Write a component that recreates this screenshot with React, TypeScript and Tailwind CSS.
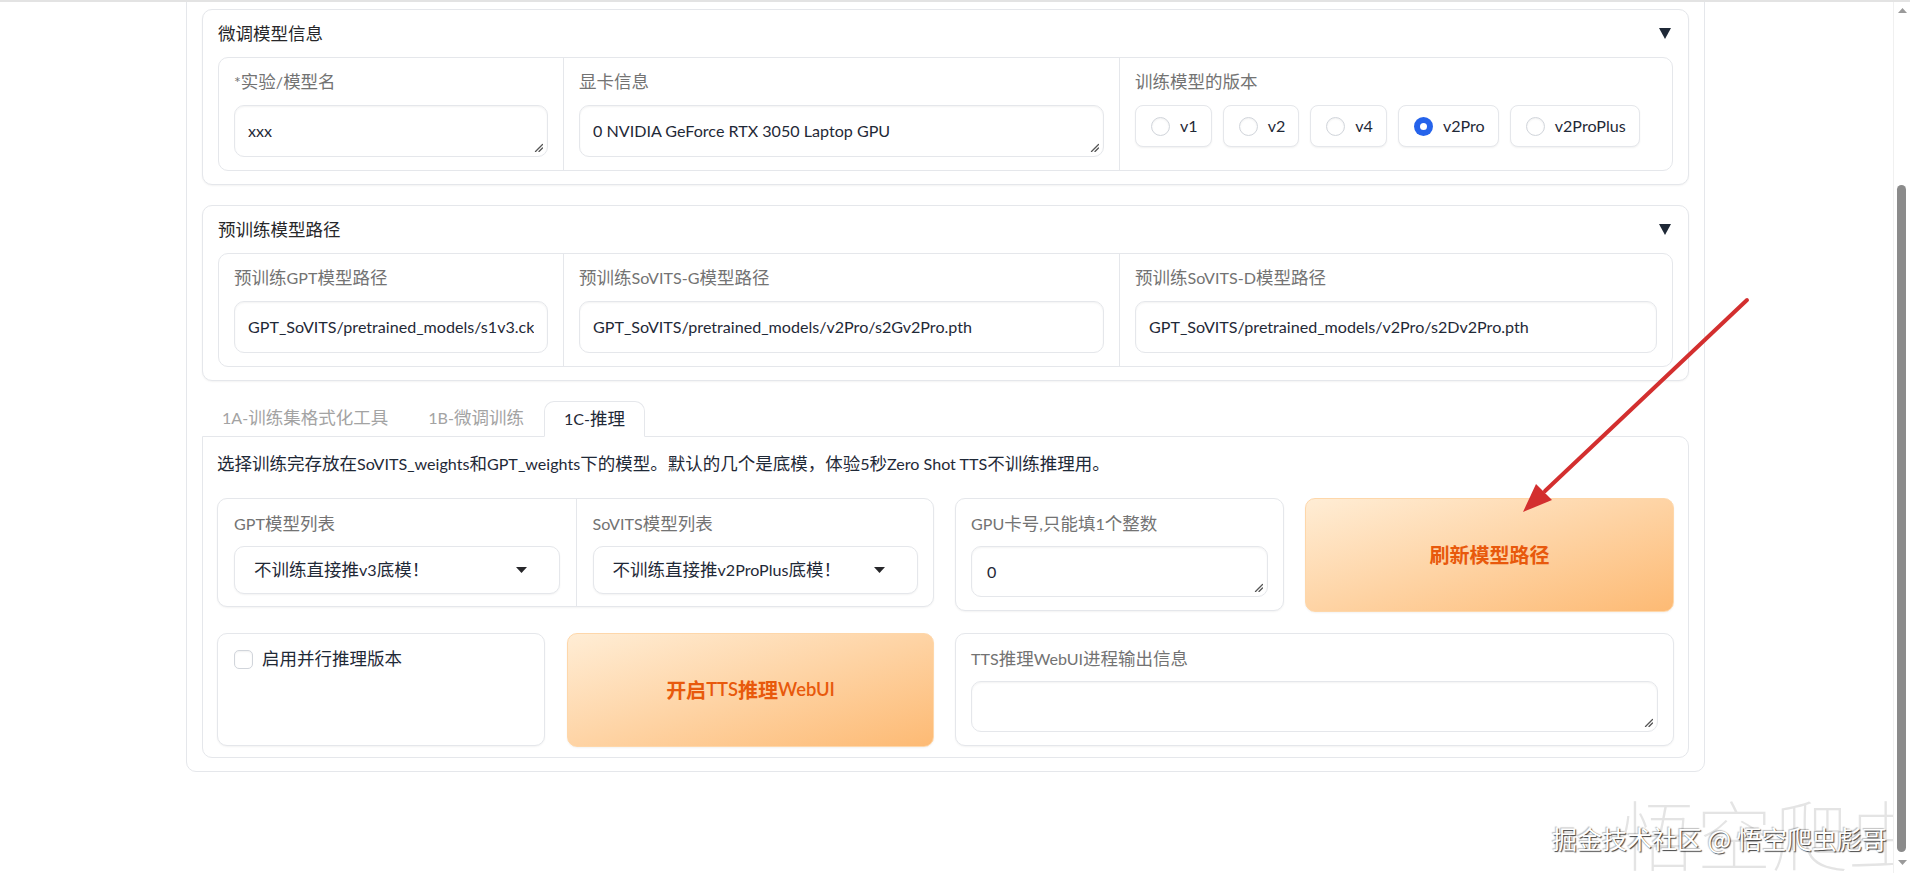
import React from 'react';

type Child = { children?: React.ReactNode };

// latin runs are set a touch smaller so they sit with the CJK glyphs
const T = ({ s }: { s: string }) => (
  <>
    {s.split(/([\x20-\x7e]+)/).map((part, i) =>
      /[\x20-\x7e]/.test(part) ? (
        <span key={i} className="text-[0.92em]">
          {part}
        </span>
      ) : (
        part
      )
    )}
  </>
);

// resize grip drawn in the bottom-right corner of a textarea
const Grip = () => (
  <svg className="absolute bottom-[4px] right-[4px]" width="9" height="9" viewBox="0 0 9 9">
    <path d="M8.5 1.5L1.5 8.5M8.5 5L5 8.5" stroke="#555" strokeWidth="1.3" strokeLinecap="round" />
  </svg>
);

const Label = ({ text }: { text: string }) => (
  <div className="text-[17.5px] leading-[24px] text-[#737373]">
    <T s={text} />
  </div>
);

const Field = ({ value, grip }: { value: string; grip?: boolean }) => (
  <div className="relative mt-[11px] flex h-[52px] items-center rounded-[10px] border border-[#e5e7eb] bg-white px-[13px] shadow-[inset_0_1px_2px_rgba(0,0,0,0.05)]">
    <span className="min-w-0 flex-1 overflow-hidden whitespace-nowrap text-[17.5px] leading-[24px] text-[#1f2937]">
      <T s={value} />
    </span>
    {grip && <Grip />}
  </div>
);

const Radio = ({ label, checked }: { label: string; checked?: boolean }) => (
  <div className="flex h-[42px] shrink-0 items-center gap-[10px] rounded-[8px] border border-[#e5e7eb] bg-white pl-[15px] pr-[13px] shadow-[0_1px_2px_rgba(0,0,0,0.06)]">
    {checked ? (
      <span className="flex h-[19px] w-[19px] items-center justify-center rounded-full bg-[#2563eb]">
        <span className="h-[7px] w-[7px] rounded-full bg-white" />
      </span>
    ) : (
      <span className="h-[19px] w-[19px] rounded-full border border-[#d1d5db] bg-white shadow-[inset_0_1px_2px_rgba(0,0,0,0.06)]" />
    )}
    <span className="text-[17.5px] leading-[24px] text-[#1f2937]">
      <T s={label} />
    </span>
  </div>
);

const Accordion = ({ title, children }: Child & { title: string }) => (
  <div className="rounded-[10px] border border-[#e5e7eb] bg-white px-[15px] pb-[13px] shadow-[0_1px_2px_rgba(0,0,0,0.05)]">
    <div className="flex h-[47px] items-center justify-between pr-[2px]">
      <span className="text-[17.5px] leading-[24px] text-[#27272a]">{title}</span>
      <svg width="12" height="11" viewBox="0 0 12 11">
        <path d="M0 0H12L6 11Z" fill="#1f2937" />
      </svg>
    </div>
    {children}
  </div>
);

const Dropdown = ({ value }: { value: string }) => (
  <div className="mt-[10px] flex h-[48px] items-center justify-between rounded-[10px] border border-[#e5e7eb] bg-white pl-[19px] pr-[32px] shadow-[0_1px_2px_rgba(0,0,0,0.05)]">
    <span className="text-[17.5px] leading-[24px] text-[#1f2937]">
      <T s={value} />
    </span>
    <svg width="11" height="6" viewBox="0 0 11 6">
      <path d="M0 0H11L5.5 6Z" fill="#27272a" />
    </svg>
  </div>
);

const Area = ({ value }: { value?: string }) => (
  <div className="relative mt-[10px] flex h-[51px] items-center rounded-[10px] border border-[#e5e7eb] bg-white px-[15px] shadow-[inset_0_1px_2px_rgba(0,0,0,0.05)]">
    <span className="text-[17.5px] leading-[24px] text-[#1f2937]">{value && <T s={value} />}</span>
    <Grip />
  </div>
);

const Tab = ({ label, active }: { label: string; active?: boolean }) =>
  active ? (
    <div className="relative z-10 -mb-px flex h-[36px] items-center rounded-t-[10px] border border-[#e5e7eb] border-b-white bg-white px-[19px] text-[17.5px] text-[#1f2937]">
      <T s={label} />
    </div>
  ) : (
    <div className="flex h-[35px] items-center px-[20px] text-[17.5px] text-[#a3a3a3]">
      <T s={label} />
    </div>
  );

const primaryBtn =
  'flex h-[114px] items-center justify-center rounded-[10px] border border-[#fed7aa] bg-[linear-gradient(to_bottom_right,#ffedd5,#fdba74)] text-[20px] font-semibold text-[#e8590c] shadow-[0_1px_2px_rgba(0,0,0,0.05)]';

export default function App() {
  return (
    <div className="relative h-[873px] w-full overflow-hidden border-t-2 border-[#e3e3e3] bg-white font-['Lato','Noto_Sans_CJK_SC',sans-serif]">
      <div className="ml-[186px] mt-[-14px] w-[1519px] rounded-[10px] border border-[#e5e7eb] bg-white px-[15px] pb-[13px] pt-[20px]">
        {/* fine-tune model info */}
        <Accordion title="微调模型信息">
          <div className="flex rounded-[10px] border border-[#e5e7eb]">
            <div className="w-[344px] shrink-0 px-[15px] pb-[13px] pt-[12px]">
              <Label text="*实验/模型名" />
              <Field value="xxx" grip />
            </div>
            <div className="w-[556px] shrink-0 border-l border-[#e5e7eb] px-[15px] pb-[13px] pt-[12px]">
              <Label text="显卡信息" />
              <Field value="0 NVIDIA GeForce RTX 3050 Laptop GPU" grip />
            </div>
            <div className="min-w-0 flex-1 border-l border-[#e5e7eb] px-[15px] pb-[13px] pt-[12px]">
              <Label text="训练模型的版本" />
              <div className="mt-[11px] flex gap-[11px]">
                <Radio label="v1" />
                <Radio label="v2" />
                <Radio label="v4" />
                <Radio label="v2Pro" checked />
                <Radio label="v2ProPlus" />
              </div>
            </div>
          </div>
        </Accordion>

        {/* pretrained model paths */}
        <div className="mt-[20px]">
          <Accordion title="预训练模型路径">
            <div className="flex rounded-[10px] border border-[#e5e7eb]">
              <div className="w-[344px] shrink-0 px-[15px] pb-[13px] pt-[12px]">
                <Label text="预训练GPT模型路径" />
                <Field value="GPT_SoVITS/pretrained_models/s1v3.ckpt" />
              </div>
              <div className="w-[556px] shrink-0 border-l border-[#e5e7eb] px-[15px] pb-[13px] pt-[12px]">
                <Label text="预训练SoVITS-G模型路径" />
                <Field value="GPT_SoVITS/pretrained_models/v2Pro/s2Gv2Pro.pth" />
              </div>
              <div className="min-w-0 flex-1 border-l border-[#e5e7eb] px-[15px] pb-[13px] pt-[12px]">
                <Label text="预训练SoVITS-D模型路径" />
                <Field value="GPT_SoVITS/pretrained_models/v2Pro/s2Dv2Pro.pth" />
              </div>
            </div>
          </Accordion>
        </div>

        {/* tabs */}
        <div className="mt-[20px] flex items-end">
          <Tab label="1A-训练集格式化工具" />
          <Tab label="1B-微调训练" />
          <Tab label="1C-推理" active />
        </div>
        <div className="rounded-b-[10px] rounded-tr-[10px] border border-[#e5e7eb] bg-white px-[14px] pb-[10px] pt-[15px]">
          <p className="text-[17.5px] leading-[24px] text-[#1f2937]">
            <T s="选择训练完存放在SoVITS_weights和GPT_weights下的模型。默认的几个是底模，体验5秒Zero Shot TTS不训练推理用。" />
          </p>

          <div className="mt-[22px] flex items-start gap-[21px]">
            <div className="flex h-[109px] w-[717px] shrink-0 rounded-[10px] border border-[#e5e7eb] bg-white shadow-[0_1px_2px_rgba(0,0,0,0.05)]">
              <div className="flex-1 px-[16px] pt-[13px]">
                <Label text="GPT模型列表" />
                <Dropdown value="不训练直接推v3底模！" />
              </div>
              <div className="flex-1 border-l border-[#e5e7eb] pl-[16px] pr-[15px] pt-[13px]">
                <Label text="SoVITS模型列表" />
                <Dropdown value="不训练直接推v2ProPlus底模！" />
              </div>
            </div>
            <div className="h-[113px] w-[329px] shrink-0 rounded-[10px] border border-[#e5e7eb] bg-white px-[15px] pt-[13px] shadow-[0_1px_2px_rgba(0,0,0,0.05)]">
              <Label text="GPU卡号,只能填1个整数" />
              <Area value="0" />
            </div>
            <button className={`${primaryBtn} flex-1`}>刷新模型路径</button>
          </div>

          <div className="mt-[21px] flex items-start gap-[21px]">
            <div className="flex h-[113px] w-[328px] shrink-0 items-start gap-[9px] rounded-[10px] border border-[#e5e7eb] bg-white px-[16px] pt-[13px] shadow-[0_1px_2px_rgba(0,0,0,0.05)]">
              <span className="mt-[3px] h-[19px] w-[19px] rounded-[5px] border border-[#d1d5db] bg-white shadow-[inset_0_1px_2px_rgba(0,0,0,0.06)]" />
              <span className="text-[17.5px] leading-[24px] text-[#1f2937]">启用并行推理版本</span>
            </div>
            <button className={`${primaryBtn} ml-[1px] w-[367px] shrink-0`}>
              <T s="开启TTS推理WebUI" />
            </button>
            <div className="h-[113px] flex-1 rounded-[10px] border border-[#e5e7eb] bg-white px-[15px] pt-[13px] shadow-[0_1px_2px_rgba(0,0,0,0.05)]">
              <Label text="TTS推理WebUI进程输出信息" />
              <Area />
            </div>
          </div>
        </div>
      </div>

      {/* red annotation arrow */}
      <svg className="pointer-events-none absolute inset-0" width="1910" height="873" viewBox="0 0 1910 873">
        <line x1="1747" y1="298" x2="1545" y2="489" stroke="#d32f2f" strokeWidth="4" strokeLinecap="round" />
        <path d="M1523 510L1536 482L1544 490L1552 498Z" fill="#d32f2f" />
      </svg>

      {/* watermark */}
      <div className="pointer-events-none absolute left-[1620px] top-[792px] whitespace-nowrap font-['Noto_Sans_CJK_SC',sans-serif] text-[76px] font-thin leading-none text-[#e4e4e4]">
        悟空爬虫
      </div>
      <div className="pointer-events-none absolute left-[1552px] top-[821px] whitespace-nowrap font-['Noto_Sans_CJK_SC',sans-serif] text-[25px] leading-[30px] text-white [text-shadow:1px_1px_1px_rgba(0,0,0,0.75),-1px_-1px_1px_rgba(0,0,0,0.25)]">
        掘金技术社区 @ 悟空爬虫彪哥
      </div>

      {/* window scrollbar */}
      <div className="absolute bottom-0 right-0 top-0 w-[17px] border-l border-[#f0f0f0] bg-white">
        <svg className="absolute left-[4px] top-[6px]" width="9" height="5" viewBox="0 0 9 5">
          <path d="M0 5H9L4.5 0Z" fill="#9a9a9a" />
        </svg>
        <div className="absolute left-[3px] top-[183px] h-[667px] w-[9px] rounded-full bg-[#8b8b8b]" />
        <svg className="absolute bottom-[8px] left-[4px]" width="9" height="5" viewBox="0 0 9 5">
          <path d="M0 0H9L4.5 5Z" fill="#9a9a9a" />
        </svg>
      </div>
    </div>
  );
}
